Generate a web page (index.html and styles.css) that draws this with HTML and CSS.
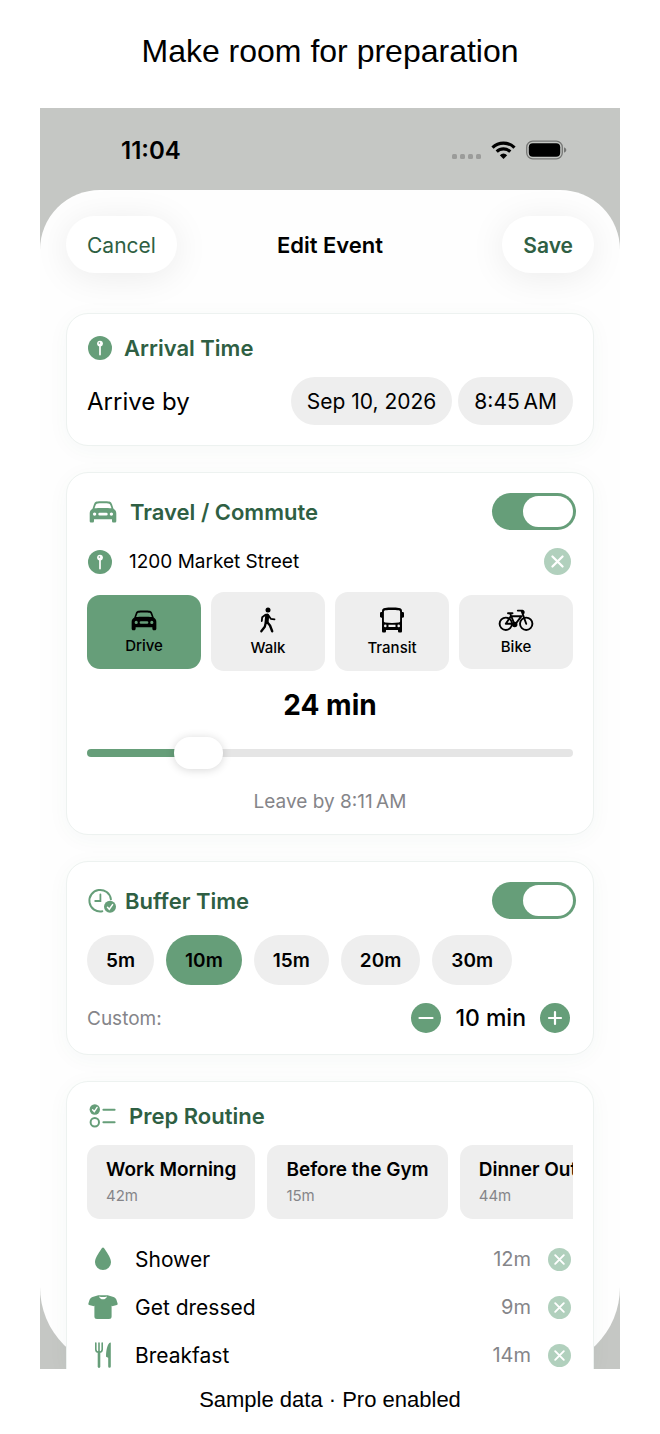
FILE: index.html
```html
<!DOCTYPE html>
<html lang="en">
<head>
  <meta charset="UTF-8">
  <meta name="viewport" content="width=device-width, initial-scale=1">
  <title>Make room for preparation</title>
  <link rel="stylesheet" href="styles.css">
</head>
<body>

  <!-- shared icons -->
  <svg class="sprite" aria-hidden="true">
    <symbol id="pin" viewBox="0 0 24 24">
      <circle cx="12" cy="12" r="12" fill="#669e79"/>
      <circle cx="12" cy="7.600" r="2.900" fill="#fff"/>
      <circle cx="11.400" cy="7" r="0.800" fill="#669e79"/>
      <path d="M12 10v8.600" stroke="#fff" stroke-width="1.700" stroke-linecap="round"/>
    </symbol>
    <symbol id="car" viewBox="0 0 28 24">
      <path fill="currentColor" fill-rule="evenodd" d="M7.5 1.6C9.5 1 18.500 1 20.500 1.600C21.900 2 22.500 3 23.100 4.600L24.500 8.700C26.500 9.900 27.300 11.300 27.300 13.500V21C27.300 22 26.600 22.600 25.700 22.600H24.500C23.600 22.600 23 22 23 21V19.300H5V21C5 22 4.400 22.600 3.500 22.600H2.300C1.400 22.600 0.700 22 0.700 21V13.500C0.700 11.300 1.500 9.900 3.500 8.700L4.900 4.600C5.500 3 6.100 2 7.500 1.600ZM7.900 3.700C7.200 3.900 6.900 4.500 6.600 5.200L5.500 8.300C9 7.800 19 7.800 22.500 8.300L21.400 5.200C21.100 4.500 20.800 3.900 20.100 3.700C18 3.200 10 3.200 7.900 3.700ZM5.600 12.400A1.700 1.700 0 1 0 5.600 15.800A1.700 1.700 0 1 0 5.600 12.400ZM22.400 12.400A1.700 1.700 0 1 0 22.400 15.800A1.700 1.700 0 1 0 22.400 12.400ZM10.700 12.800A1.400 1.400 0 0 0 10.700 15.600H17.300A1.400 1.400 0 0 0 17.300 12.800Z"/>
    </symbol>
    <symbol id="remove" viewBox="0 0 24 24">
      <circle cx="12" cy="12" r="12" fill="#b1d0bd"/>
      <path d="M7.500 7.500l9 9M16.500 7.500l-9 9" stroke="#fff" stroke-width="2" stroke-linecap="round"/>
    </symbol>
  </svg>

  <h1 class="headline">Make room for preparation</h1>

  <main class="phone">
    <div class="status-bar">
      <span class="clock">11:04</span>
      <span class="status-icons">
        <svg width="29" height="20" viewBox="0 0 29 20" fill="#9b9c9a">
          <rect x="0" y="14" width="5" height="5" rx="1.500"/>
          <rect x="8" y="14" width="5" height="5" rx="1.500"/>
          <rect x="16" y="14" width="5" height="5" rx="1.500"/>
          <rect x="24" y="14" width="5" height="5" rx="1.500"/>
        </svg>
        <svg width="25" height="20" viewBox="0 0 25 20" fill="none" stroke="#000">
          <path d="M1.500 7.600A15.600 15.600 0 0 1 23.500 7.600" stroke-width="3.200"/>
          <path d="M5.700 11.700A9.700 9.700 0 0 1 19.300 11.700" stroke-width="3.100"/>
          <path d="M8.800 15.200Q12.500 12 16.200 15.200L12.500 19Z" fill="#000" stroke="none"/>
        </svg>
        <svg width="41" height="20" viewBox="0 0 41 20">
          <rect x="0.700" y="1.200" width="35.600" height="17.600" rx="6" fill="none" stroke="#767775" stroke-width="1.300"/>
          <rect x="2.800" y="3.300" width="31.400" height="13.400" rx="4" fill="#000"/>
          <path d="M38 7.200q2.400 1 2.400 2.800t-2.400 2.800z" fill="#767775"/>
        </svg>
      </span>
    </div>

    <div class="sheet">
      <header class="toolbar">
        <button type="button" class="toolbar-btn">Cancel</button>
        <h2 class="toolbar-title">Edit Event</h2>
        <button type="button" class="toolbar-btn save-btn">Save</button>
      </header>

      <section class="card">
        <h3 class="card-title">
          <svg class="icon-pin"><use href="#pin"/></svg>
          Arrival Time
        </h3>
        <div class="arrival-row">
          <span class="arrival-label">Arrive by</span>
          <span class="pickers">
            <button type="button" class="picker">Sep 10, 2026</button>
            <button type="button" class="picker">8:45&#8239;AM</button>
          </span>
        </div>
      </section>

      <section class="card">
        <div class="card-head">
          <h3 class="card-title car-title">
            <svg class="icon-car"><use href="#car"/></svg>
            <label for="travel-on">Travel / Commute</label>
          </h3>
          <input type="checkbox" class="toggle" id="travel-on" checked>
        </div>

        <div class="address-row">
          <svg class="icon-pin"><use href="#pin"/></svg>
          <span class="address">1200 Market Street</span>
          <button type="button" class="remove-btn" aria-label="Clear address"><svg width="27" height="27"><use href="#remove"/></svg></button>
        </div>

        <div class="modes">
          <button type="button" class="mode active">
            <svg width="26" height="23"><use href="#car"/></svg>
            Drive
          </button>
          <button type="button" class="mode mode-tall">
            <svg width="18" height="28" viewBox="0 0 18 28" fill="none" stroke="#000" stroke-linecap="round" stroke-linejoin="round">
              <circle cx="9" cy="4" r="2.500" fill="#000" stroke="none"/>
              <path d="M8.200 9.500L7.600 16" stroke-width="4"/>
              <path d="M6.500 8.800L3.200 11.200L2.800 15" stroke-width="1.800"/>
              <path d="M9.500 9.500L11.800 12.800L15.500 13.300" stroke-width="1.800"/>
              <path d="M8.500 16.500L11 19.500L13.200 25.300" stroke-width="2.400"/>
              <path d="M6.800 16.500L5.800 20.800L2.300 25.300" stroke-width="2.300"/>
            </svg>
            Walk
          </button>
          <button type="button" class="mode mode-tall">
            <svg width="26" height="28" viewBox="0 0 26 28">
              <path fill="#000" fill-rule="evenodd" d="M3 5C3 3.200 4 2.200 6 2C10 1.400 16 1.400 20 2C22 2.200 23 3.200 23 5V6H23.700C24.600 6 25 6.600 25 7.300V10.500C25 11.300 24.300 11.700 23.500 11.700H23V25C23 26 22.500 26.600 21.500 26.600H20.500C19.500 26.600 19 26 19 25V24H7V25C7 26 6.500 26.600 5.500 26.600H4.500C3.500 26.600 3 26 3 25V11.700H2.500C1.700 11.700 1 11.300 1 10.500V7.300C1 6.600 1.400 6 2.300 6H3ZM4.900 6V15C4.900 16 5.300 16.400 6.200 16.500C10 17 16 17 19.800 16.500C20.700 16.400 21.100 16 21.100 15V6C21.100 4.800 20.600 4.300 19.600 4.200C16 3.800 10 3.800 6.400 4.200C5.400 4.300 4.900 4.800 4.900 6ZM6.300 18.600A1.300 1.300 0 1 0 6.300 21.200A1.300 1.300 0 1 0 6.300 18.600ZM19.700 18.600A1.300 1.300 0 1 0 19.700 21.200A1.300 1.300 0 1 0 19.700 18.600ZM9.500 18.800V21H16.500V18.800Z"/>
            </svg>
            Transit
          </button>
          <button type="button" class="mode">
            <svg width="36" height="25" viewBox="0 0 36 25" fill="none" stroke="#000" stroke-width="1.900" stroke-linecap="round" stroke-linejoin="round">
              <circle cx="7.800" cy="15.800" r="6.200"/>
              <circle cx="28.200" cy="15.800" r="6.200"/>
              <path d="M7.800 15.800L12.800 8.200H23.500L16.800 16.800L12.300 6M7.800 15.800H16.500M10 5.300H14.500M28.200 15.800L23.500 2.600H19.800M23.500 2.600H24.500Q26 2.800 25.600 5"/>
              <circle cx="16.700" cy="16.500" r="1.800" fill="#000"/>
            </svg>
            Bike
          </button>
        </div>

        <output class="duration" for="travel-time">24 min</output>
        <input type="range" class="slider" id="travel-time" aria-label="Travel time in minutes" min="0" max="120" value="24">
        <p class="leave-by">Leave by 8:11&#8239;AM</p>
      </section>

      <section class="card">
        <div class="card-head">
          <h3 class="card-title buffer-title">
            <svg width="30" height="26" viewBox="-1 0 30 26" fill="none" stroke="#669e79" stroke-width="2" stroke-linecap="round">
              <path d="M14.300 23.300A10.800 10.800 0 1 1 22.900 11.300"/>
              <path d="M12.400 6.500V13H7.200" stroke-width="1.800"/>
              <circle cx="22" cy="18.800" r="6" fill="#669e79" stroke="none"/>
              <path d="M19.500 19.200L21.300 21.300L24.600 16.600" stroke="#fff" stroke-width="1.500"/>
            </svg>
            <label for="buffer-on">Buffer Time</label>
          </h3>
          <input type="checkbox" class="toggle" id="buffer-on" checked>
        </div>

        <div class="chips">
          <button type="button" class="chip">5m</button>
          <button type="button" class="chip active">10m</button>
          <button type="button" class="chip">15m</button>
          <button type="button" class="chip">20m</button>
          <button type="button" class="chip">30m</button>
        </div>

        <div class="custom-row">
          <span class="custom-label">Custom:</span>
          <span class="stepper">
            <button type="button" class="step-btn" aria-label="Less">
              <svg width="16" height="16" viewBox="0 0 16 16" stroke="#fff" stroke-width="2.200" stroke-linecap="round"><path d="M1.500 8h13"/></svg>
            </button>
            <span class="step-value">10 min</span>
            <button type="button" class="step-btn" aria-label="More">
              <svg width="16" height="16" viewBox="0 0 16 16" stroke="#fff" stroke-width="2.200" stroke-linecap="round"><path d="M2 8h12M8 2v12"/></svg>
            </button>
          </span>
        </div>
      </section>

      <section class="card card-last">
        <h3 class="card-title prep-title">
          <svg width="30" height="26" viewBox="0 0 30 26" fill="none" stroke="#669e79" stroke-width="2" stroke-linecap="round">
            <circle cx="7.800" cy="6.500" r="5.200" fill="#669e79" stroke="none"/>
            <path d="M5.600 6.700L7.300 8.700L10.100 4.400" stroke="#fff" stroke-width="1.400"/>
            <circle cx="7.800" cy="19.300" r="4.200"/>
            <path d="M16.400 6.700H27.600M16.400 19.300H27.600"/>
          </svg>
          Prep Routine
        </h3>

        <div class="presets">
          <button type="button" class="preset">Work Morning <small>42m</small></button>
          <button type="button" class="preset">Before the Gym <small>15m</small></button>
          <button type="button" class="preset">Dinner Out <small>44m</small></button>
        </div>

        <ul class="steps">
          <li class="step">
            <svg class="step-icon" viewBox="0 0 32 26" fill="#669e79">
              <path d="M16 1.500C16.700 1.500 17.300 2.300 18 3.400C20.500 7.300 24 12 24 16.200A8 7.800 0 0 1 8 16.200C8 12 11.500 7.300 14 3.400C14.700 2.300 15.300 1.500 16 1.500Z"/>
            </svg>
            <span class="step-name">Shower</span>
            <span class="step-time">12m</span>
            <button type="button" class="remove-btn" aria-label="Remove Shower"><svg width="23" height="23"><use href="#remove"/></svg></button>
          </li>
          <li class="step">
            <svg class="step-icon" viewBox="0 0 32 26" fill="#669e79">
              <path d="M11.300 1.200H20.700L26.500 3C28 3.500 29 4.500 29.500 6L30.600 9.600C30.800 10.300 30.500 10.800 29.900 11L26 12.100C25.300 12.300 24.700 12 24.600 11.500V22.500C24.600 24.200 23.700 25 22 25H10C8.300 25 7.400 24.200 7.400 22.500V11.500C7.300 12 6.700 12.300 6 12.100L2.100 11C1.500 10.800 1.200 10.300 1.400 9.600L2.500 6C3 4.500 4 3.500 5.500 3Z"/>
              <path d="M12 2.400Q16 3.800 20 2.400Q19 5.200 16 5.200Q13 5.200 12 2.400Z" fill="#fff"/>
            </svg>
            <span class="step-name">Get dressed</span>
            <span class="step-time">9m</span>
            <button type="button" class="remove-btn" aria-label="Remove Get dressed"><svg width="23" height="23"><use href="#remove"/></svg></button>
          </li>
          <li class="step">
            <svg class="step-icon" viewBox="0 0 32 26" fill="#669e79">
              <path d="M8.800 1V7.500Q8.800 10.200 12 10.200T15.200 7.500V1M12 1V10" fill="none" stroke="#669e79" stroke-width="1.600" stroke-linecap="round"/>
              <path d="M12 10V24.600" stroke="#669e79" stroke-width="2.600" stroke-linecap="round"/>
              <path d="M23.800 0.800V24.400Q23.800 25.800 22.500 25.800T21.200 24.400V15.800L19.500 15Q18.900 14.700 19 13.900C19.200 8 20.300 3 22.300 1Q23.500 0 23.800 0.800Z"/>
            </svg>
            <span class="step-name">Breakfast</span>
            <span class="step-time">14m</span>
            <button type="button" class="remove-btn" aria-label="Remove Breakfast"><svg width="23" height="23"><use href="#remove"/></svg></button>
          </li>
        </ul>
      </section>
    </div>
  </main>

  <p class="footnote">Sample data · Pro enabled</p>

</body>
</html>
```
FILE: styles.css
```css
* {
  box-sizing: border-box;
}
body {
  margin: 0;
  padding: 31px 40px 20px;
  background-color: #fff;
  color: #000;
  font-family: Inter, "Liberation Sans", sans-serif;
}
h1, h2, h3, p, ul {
  margin: 0;
  padding: 0;
}
button {
  border: none;
  padding: 0;
  background: none;
  color: inherit;
  font-family: inherit;
  cursor: pointer;
}
svg {
  display: block;
  flex: none;
}
.sprite {
  position: absolute;
  width: 0;
  height: 0;
}
.headline,
.footnote {
  font-family: "Liberation Sans", Arial, sans-serif;
  font-weight: 400;
  text-align: center;
}
.headline {
  margin-bottom: 37px;
  font-size: 32px;
  line-height: 40px;
}
.footnote {
  margin-top: 17px;
  font-size: 22px;
  line-height: 28px;
}

/* phone */
.phone {
  overflow: hidden;
  background-color: #c5c7c4;
}
.status-bar {
  display: flex;
  justify-content: space-between;
  align-items: center;
  height: 82px;
  padding: 2px 53px 0 81px;
}
.clock {
  font-size: 24px;
  font-weight: 600;
}
.status-icons {
  display: flex;
  gap: 10px;
}
.sheet {
  padding: 26px 26px 0;
  border-radius: 60px 60px 82px 82px;
  background-color: #fefefe;
}

/* toolbar */
.toolbar {
  display: grid;
  grid-template-columns: 1fr auto 1fr;
  align-items: center;
  margin-bottom: 40px;
}
.toolbar-btn {
  justify-self: start;
  height: 57px;
  padding: 1px 21px 0;
  border-radius: 29px;
  background-color: #fff;
  box-shadow: 0 4px 36px rgba(0,0,0,0.08);
  color: #2f5f43;
  font-size: 21px;
}
.save-btn {
  justify-self: end;
  font-weight: 600;
}
.toolbar-title {
  font-size: 22px;
  font-weight: 600;
}

/* cards */
.card {
  margin-bottom: 26px;
  padding: 20px;
  border: 1px solid #edf2f0;
  border-radius: 22px;
  background-color: #fff;
  box-shadow: 0 4px 22px rgba(60,100,80,0.04);
}
.card-last {
  margin-bottom: 0;
  padding-bottom: 1px;
  border-bottom: none;
  border-radius: 22px 22px 0 0;
}
.card-head {
  display: flex;
  justify-content: space-between;
  align-items: center;
}
.card-title {
  display: flex;
  align-items: center;
  gap: 12px;
  color: #2f5f43;
  font-size: 22px;
  font-weight: 600;
  line-height: 28px;
}
.car-title {
  gap: 13px;
}
.buffer-title {
  gap: 8px;
}
.icon-pin {
  width: 24px;
  height: 24px;
  margin-left: 1px;
}
.icon-car {
  width: 28px;
  height: 24px;
  margin-left: 2px;
  color: #669e79;
}

/* arrival */
.arrival-row {
  display: flex;
  justify-content: space-between;
  align-items: center;
  margin-top: 15px;
}
.arrival-label {
  font-size: 24px;
}
.pickers {
  display: flex;
  gap: 6px;
}
.picker {
  height: 48px;
  padding: 0 16px;
  border-radius: 24px;
  background-color: #eee;
  font-size: 21px;
}

/* travel */
.toggle {
  appearance: none;
  display: flex;
  justify-content: flex-end;
  width: 84px;
  height: 37px;
  margin: 0 -3px 0 0;
  padding: 3px;
  border-radius: 19px;
  background-color: #669e79;
  cursor: pointer;
}
.toggle::before {
  content: "";
  width: 50px;
  border-radius: 16px;
  background-color: #fff;
}
.toggle:not(:checked) {
  justify-content: flex-start;
  background-color: #ddd;
}
.address-row {
  display: flex;
  align-items: center;
  margin-top: 18px;
  padding-right: 2px;
}
.address {
  flex: 1;
  padding-left: 17px;
  font-size: 19px;
}
.modes {
  display: grid;
  grid-template-columns: repeat(4, 1fr);
  gap: 10px;
  align-items: center;
  margin-top: 17px;
}
.mode {
  display: flex;
  flex-direction: column;
  align-items: center;
  justify-content: center;
  gap: 5px;
  height: 74px;
  border-radius: 13px;
  background-color: #eee;
  font-size: 15px;
  font-weight: 500;
  line-height: 18px;
}
.mode-tall {
  height: 79px;
}
.active {
  background-color: #669e79;
}
.duration {
  display: block;
  margin-top: 17px;
  font-size: 28px;
  font-weight: 700;
  line-height: 34px;
  text-align: center;
}
.slider {
  appearance: none;
  display: block;
  width: 100%;
  height: 32px;
  margin: 15px 0 21px;
  background: none;
}
.slider::-webkit-slider-runnable-track {
  height: 8px;
  border-radius: 4px;
  background: linear-gradient(to right, #669e79 22%, #e5e5e5 22%);
}
.slider::-webkit-slider-thumb {
  appearance: none;
  width: 49px;
  height: 32px;
  margin-top: -12px;
  border-radius: 16px;
  background-color: #fff;
  box-shadow: 0 1px 10px rgba(0,0,0,0.16);
}
.leave-by {
  color: #858589;
  font-size: 19px;
  line-height: 24px;
  text-align: center;
}

/* buffer */
.chips {
  display: flex;
  gap: 12px;
  margin-top: 16px;
}
.chip {
  height: 50px;
  padding: 0 19px;
  border-radius: 25px;
  background-color: #eee;
  font-size: 19px;
  font-weight: 600;
}
.chip.active {
  background-color: #669e79;
}
.custom-row {
  display: flex;
  justify-content: space-between;
  align-items: center;
  margin-top: 18px;
  padding: 0 3px 1px 0;
}
.custom-label {
  color: #858589;
  font-size: 19px;
}
.stepper {
  display: flex;
  align-items: center;
  gap: 14px;
}
.step-btn {
  display: flex;
  align-items: center;
  justify-content: center;
  width: 30px;
  height: 30px;
  border-radius: 50%;
  background-color: #669e79;
}
.step-value {
  font-size: 23px;
  font-weight: 500;
}

/* prep routine */
.presets {
  display: flex;
  gap: 12px;
  margin-top: 15px;
  overflow-x: auto;
  scrollbar-width: none;
}
.preset {
  flex: none;
  height: 74px;
  padding: 0 19px;
  border-radius: 13px;
  background-color: #eee;
  font-size: 19px;
  font-weight: 600;
  line-height: 28px;
  text-align: left;
}
.preset small {
  display: block;
  color: #858589;
  font-size: 15px;
  font-weight: 400;
  line-height: 24px;
}
.steps {
  display: flex;
  flex-direction: column;
  gap: 22px;
  margin-top: 27px;
  list-style: none;
}
.step {
  display: flex;
  align-items: center;
  height: 26px;
  padding-right: 2px;
}
.step-icon {
  width: 32px;
  height: 26px;
}
.step-name {
  flex: 1;
  padding-left: 16px;
  font-size: 21px;
}
.step-time {
  margin-right: 17px;
  color: #858589;
  font-size: 20px;
}
```
